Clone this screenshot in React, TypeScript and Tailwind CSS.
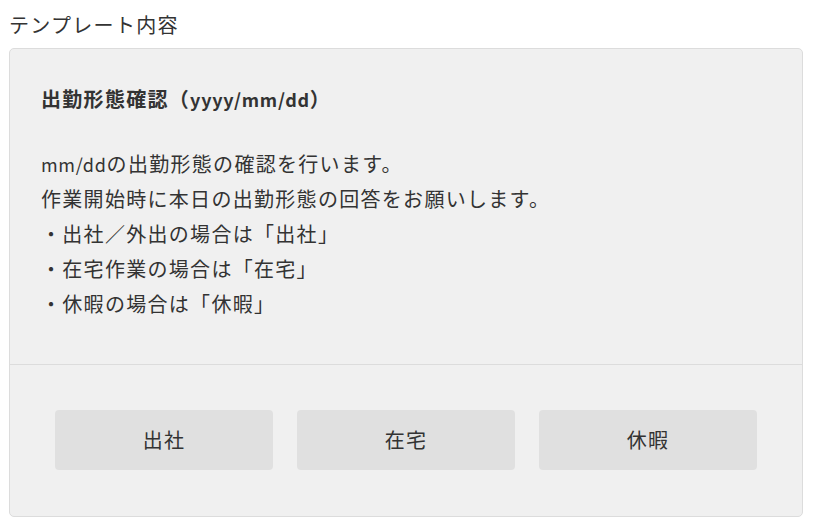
const font = { fontFamily: '"Noto Sans CJK JP", "Noto Sans", sans-serif' };

// CJK runs are set larger than the Latin runs in this design
function Txt({ text }: { text: string }) {
  const parts = text.match(/[\x20-\x7e]+|[^\x20-\x7e]+/g) ?? [];
  return (
    <>
      {parts.map((p, i) =>
        /^[\x20-\x7e]+$/.test(p) ? (
          <span key={i} className="text-[18px] leading-none tracking-[0.7px]">
            {p}
          </span>
        ) : (
          <span key={i} className="text-[20px] leading-none tracking-[1.3px]">
            {p}
          </span>
        )
      )}
    </>
  );
}

const lines = [
  "mm/ddの出勤形態の確認を行います。",
  "作業開始時に本日の出勤形態の回答をお願いします。",
  "・出社／外出の場合は「出社」",
  "・在宅作業の場合は「在宅」",
  "・休暇の場合は「休暇」",
];

const options = ["出社", "在宅", "休暇"];

export default function App() {
  return (
    <div className="min-h-[529px] bg-white pl-[9px] pr-[10px] text-[20px] text-[#333]" style={font}>
      <p className="pt-[13px] pb-[11px] leading-[24px]">
        <Txt text="テンプレート内容" />
      </p>
      <div className="rounded-[5px] border border-[#dcdcdc] bg-[#f0f0f0]">
        <div className="border-b border-[#dcdcdc] px-[31px] pt-[38px] pb-[43px]">
          <p className="font-bold leading-[24px]">
            <Txt text="出勤形態確認（yyyy/mm/dd）" />
          </p>
          <div className="mt-[35px] leading-[35px]">
            {lines.map((line) => (
              <p key={line} className="whitespace-nowrap">
                <Txt text={line} />
              </p>
            ))}
          </div>
        </div>
        <div className="grid grid-cols-3 gap-6 px-[45px] pt-[45px] pb-[46px]">
          {options.map((label) => (
            <button key={label} className="h-[60px] rounded-[4px] bg-[#e0e0e0] text-[20px] text-[#333]">
              <Txt text={label} />
            </button>
          ))}
        </div>
      </div>
    </div>
  );
}
